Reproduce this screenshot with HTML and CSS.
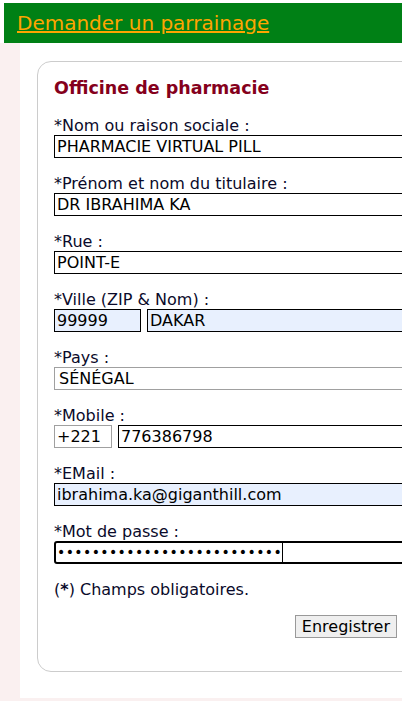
FILE: index.html
```
<!DOCTYPE html>
<html lang="fr">
<head>
    <meta charset="UTF-8">
    <title>Officine de pharmacie</title>
    <link rel="stylesheet" href="styles.css">
</head>
<body>
    <div class="topbar">
        <a href="#">Demander un parrainage</a>
    </div>

    <div class="page">
        <div class="content">
            <div class="card">
                <h2>Officine de pharmacie</h2>

                <form>
                    <div class="field">
                        <label>*Nom ou raison sociale :</label>
                        <input type="text" class="txt" value="PHARMACIE VIRTUAL PILL">
                    </div>
                    <div class="field">
                        <label>*Prénom et nom du titulaire :</label>
                        <input type="text" class="txt" value="DR IBRAHIMA KA">
                    </div>
                    <div class="field">
                        <label>*Rue :</label>
                        <input type="text" class="txt" value="POINT-E">
                    </div>
                    <div class="field">
                        <label>*Ville (ZIP &amp; Nom) :</label>
                        <div class="pair">
                            <input type="text" class="txt filled zip" value="99999">
                            <input type="text" class="txt filled" value="DAKAR">
                        </div>
                    </div>
                    <div class="field">
                        <label>*Pays :</label>
                        <input type="text" class="txt gray country" value="SÉNÉGAL">
                    </div>
                    <div class="field">
                        <label>*Mobile :</label>
                        <div class="pair">
                            <input type="text" class="txt gray prefix" value="+221">
                            <input type="text" class="txt" value="776386798">
                        </div>
                    </div>
                    <div class="field">
                        <label>*EMail :</label>
                        <input type="text" class="txt filled" value="ibrahima.ka@giganthill.com">
                    </div>
                    <div class="field">
                        <label>*Mot de passe :</label>
                        <div class="pass-field"><span class="pass-dots">••••••••••••••••••••••••••</span></div>
                    </div>

                    <p class="note">(<b>*</b>) Champs obligatoires.</p>

                    <div class="actions">
                        <button type="button">Enregistrer</button>
                    </div>
                </form>
            </div>
        </div>
    </div>
</body>
</html>
```

FILE: styles.css
```
html, body {
    margin: 0;
    background-color: #ffffff;
    overflow: hidden;
}
body {
    font-family: 'DejaVu Sans', Verdana, sans-serif;
    color: #0a0a2a;
}
.topbar {
    margin: 3px 0 0 4px;
    height: 40px;
    background-color: #008015;
    padding-left: 13px;
    display: flex;
    align-items: center;
}
.topbar a {
    color: #ffa500;
    font-size: 20px;
}
.page {
    background-color: #faf0f0;
    padding: 0 0 5px 20px;
}
.content {
    background-color: #ffffff;
    padding: 18px 0 26px 17px;
}
.card {
    width: 420px;
    border: 1px solid #cccccc;
    border-radius: 14px;
    padding: 14px 16px 33px 16px;
}
h2 {
    margin: 0 0 17px 0;
    color: #85001c;
    font-size: 17.5px;
    line-height: 24px;
    font-weight: bold;
}
.field {
    margin-bottom: 17px;
}
.field label {
    display: block;
    font-size: 16px;
    line-height: 18px;
}
.txt {
    box-sizing: border-box;
    display: block;
    width: 380px;
    height: 23px;
    margin: 0;
    padding: 0 2px;
    border: 1px solid #000000;
    border-radius: 0;
    background-color: #ffffff;
    font-family: 'DejaVu Sans', Verdana, sans-serif;
    font-size: 16px;
    color: #000000;
    outline: none;
}
.txt.filled {
    background-color: #e8f0fe;
}
.txt.gray {
    border-color: #a0a0a0;
}
.txt.country {
    padding-left: 4px;
}
.pair {
    display: flex;
    gap: 6px;
}
.pair .txt {
    flex: none;
}
.txt.zip {
    width: 87px;
}
.txt.prefix {
    width: 58px;
}
.pass-field {
    box-sizing: border-box;
    width: 380px;
    height: 23px;
    border: 2px solid #000000;
    border-radius: 3px;
    padding-left: 1px;
    display: flex;
}
.pass-dots {
    border-right: 1px solid #000000;
    font-size: 14px;
    line-height: 19px;
    letter-spacing: 0.4px;
    color: #000000;
}
.note {
    margin: 0 0 16px 0;
    font-size: 16px;
    line-height: 18px;
}
.actions {
    width: 343px;
    text-align: right;
}
.actions button {
    font-family: 'DejaVu Sans', Verdana, sans-serif;
    font-size: 16px;
    color: #000000;
    background-color: #efefef;
    border: 1px solid #999999;
    border-radius: 0;
    padding: 0 6px;
    height: 23px;
}
```
